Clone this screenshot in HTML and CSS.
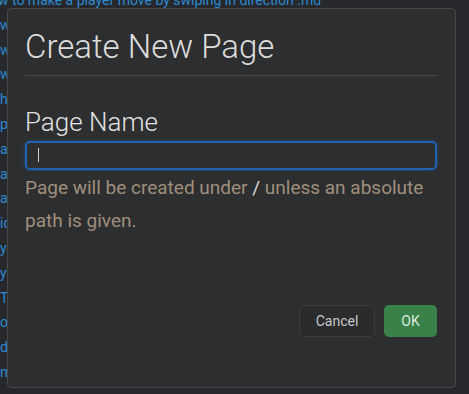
FILE: index.html
```html
<!DOCTYPE html>
<html lang="en">

<head>
    <meta charset="UTF-8">
    <meta name="viewport" content="width=device-width, initial-scale=1.0">
    <title>Create New Page</title>
    <link rel="stylesheet" href="styles.css">
</head>

<body>

    <!-- Page list behind the dialog -->
    <ul class="page-list">
        <li class="first"><a href="#">How to make a player move by swiping in direction .md</a></li>
        <li><a href="#">w to add a new level.md</a></li>
        <li><a href="#">w to save the game.md</a></li>
        <li><a href="#">w to load assets.md</a></li>
        <li><a href="#">hared notes.md</a></li>
        <li><a href="#">ptions menu.md</a></li>
        <li><a href="#">animation basics.md</a></li>
        <li><a href="#">audio manager.md</a></li>
        <li><a href="#">actions list.md</a></li>
        <li><a href="#">ideas.md</a></li>
        <li><a href="#">ysics tuning.md</a></li>
        <li><a href="#">ypography.md</a></li>
        <li><a href="#">Todo.md</a></li>
        <li><a href="#">ools.md</a></li>
        <li><a href="#">d levels.md</a></li>
        <li><a href="#">menu flow.md</a></li>
    </ul>

    <!-- Dialog -->
    <div class="modal">
        <div class="modal-content">
            <h2 class="modal-title">Create New Page</h2>
            <div class="modal-body">
                <label for="pageName">Page Name</label>
                <div class="input-box" id="pageName"><span class="caret"></span></div>
                <p class="help">Page will be created under <span class="slash">/</span> unless an absolute path is given.</p>
            </div>
            <div class="modal-footer">
                <button class="btn btn-cancel">Cancel</button>
                <button class="btn btn-ok">OK</button>
            </div>
        </div>
    </div>

</body>

</html>
```

FILE: styles.css
```css
/* Reset */
* {
    margin: 0;
    padding: 0;
    box-sizing: border-box;
}

body {
    font-family: Roboto, "Liberation Sans", sans-serif;
    background-color: #27282b;
    width: 469px;
    height: 394px;
    overflow: hidden;
    position: relative;
}

/* Page list */
.page-list {
    list-style: none;
    margin-top: -12px;
}

.page-list li {
    height: 24.8px;
    line-height: 24.8px;
    font-size: 14px;
    white-space: nowrap;
}

.page-list li.first {
    text-indent: -20px;
}

.page-list a {
    color: #2b8ad4;
    text-decoration: none;
}

/* Dialog */
.modal {
    position: absolute;
    left: 7px;
    top: 8px;
    width: 449px;
    height: 380px;
}

.modal-content {
    height: 100%;
    background-color: #2d2e30;
    border: 1px solid #46474a;
    border-radius: 4px;
    padding: 0 18px 0 17px;
    display: flex;
    flex-direction: column;
    color: #dcdcdc;
}

.modal-title {
    font-weight: 300;
    font-size: 33px;
    line-height: 36px;
    padding: 20px 0 10px;
    border-bottom: 1px solid #47484b;
}

.modal-body {
    padding-top: 31px;
    flex-grow: 1;
}

.modal-body label {
    display: block;
    font-size: 26px;
    font-weight: 300;
    line-height: 30px;
    margin-bottom: 4px;
    color: #e2e2e2;
}

.input-box {
    height: 29px;
    border: 2px solid #1f62b3;
    border-radius: 5px;
    box-shadow: 0 0 2px 1px rgba(31, 98, 179, 0.35);
    padding: 5px 11px;
}

.caret {
    display: block;
    width: 1px;
    height: 14px;
    background-color: #cfcfcf;
}

.help {
    font-size: 19px;
    line-height: 33px;
    color: #a08e7c;
    padding-top: 1px;
}

.help .slash {
    color: #dcdcdc;
}

/* Footer buttons */
.modal-footer {
    display: flex;
    justify-content: flex-end;
    gap: 9px;
    padding-bottom: 50px;
}

.btn {
    font-family: Roboto, "Liberation Sans", sans-serif;
    font-size: 14px;
    height: 32px;
    border-radius: 5px;
    cursor: pointer;
}

.btn-cancel {
    width: 76px;
    background-color: #2a2b2d;
    border: 1px solid #3c3d40;
    color: #c8c8c8;
}

.btn-ok {
    width: 53px;
    background-color: #398148;
    border: none;
    color: #dde8dd;
}
```
